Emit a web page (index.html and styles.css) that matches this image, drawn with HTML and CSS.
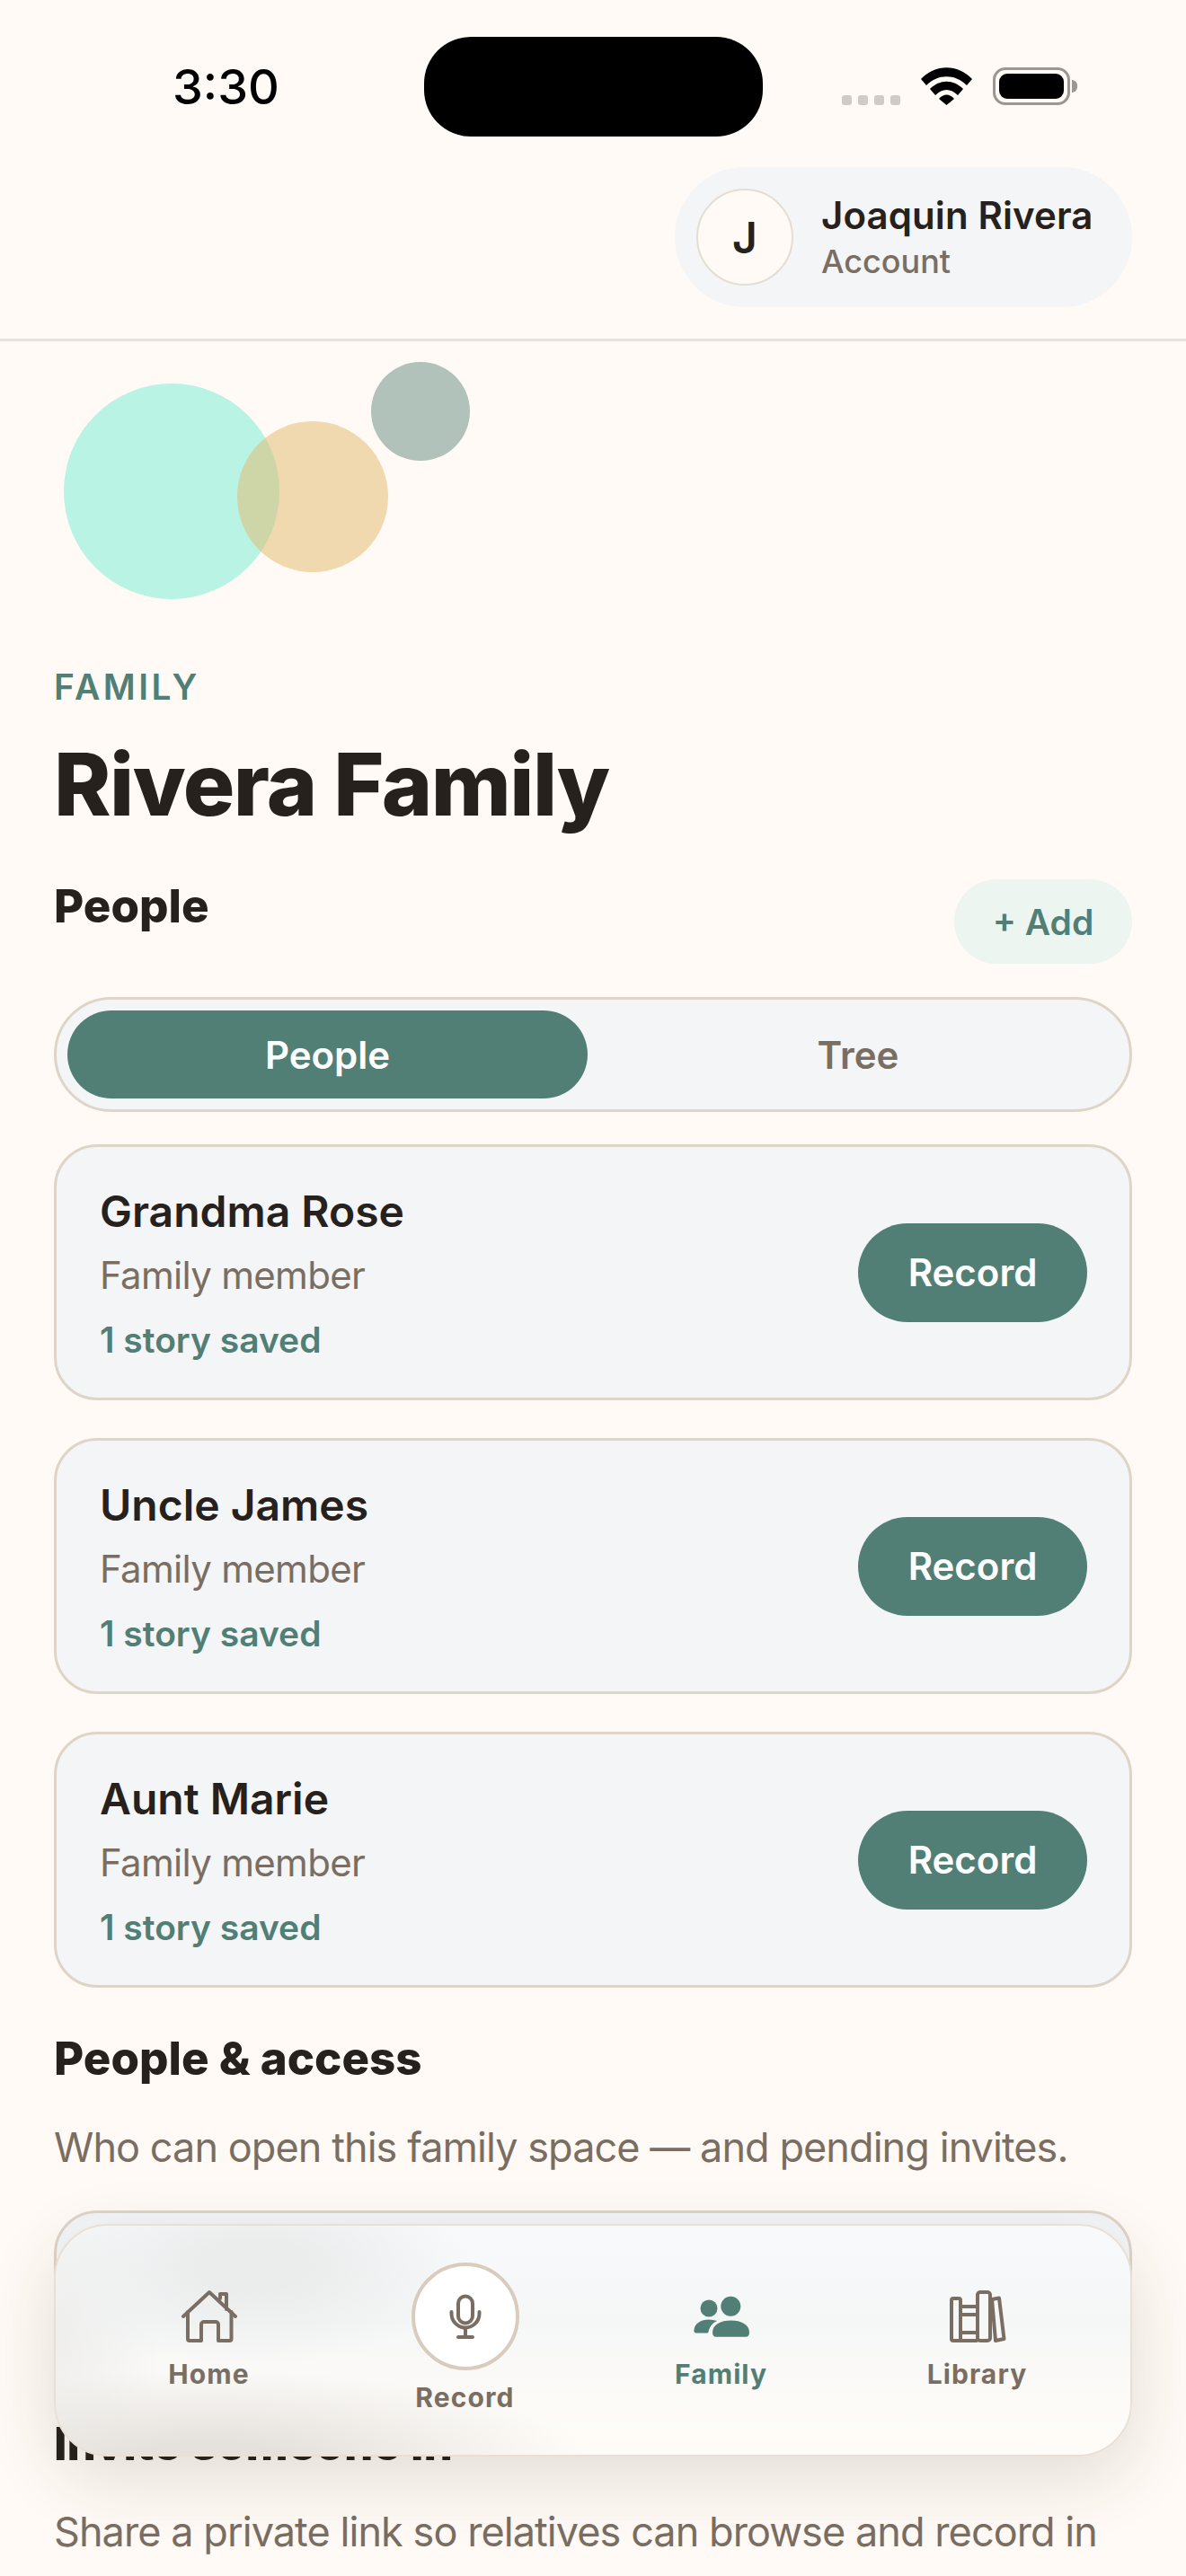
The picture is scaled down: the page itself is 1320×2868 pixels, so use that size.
FILE: index.html
```html
<!DOCTYPE html>
<html lang="en">
<head>
    <meta charset="UTF-8">
    <meta name="viewport" content="width=device-width, initial-scale=1.0">
    <title>Rivera Family</title>
    <link rel="stylesheet" href="styles.css">
</head>
<body>
    <div class="phone">
        <div class="status-bar">
            <div class="status-time">3:30</div>
            <div class="island"></div>
            <div class="status-icons">
                <div class="signal"><span></span><span></span><span></span><span></span></div>
                <svg class="wifi" viewBox="0 0 57 42" width="57" height="42">
                    <path d="M0 13 C16 -4 41 -4 57 13 L51 20 C38 7 19 7 6 20 Z"/>
                    <path d="M10 24 C21 13 36 13 47 24 L41 31 C33 23 24 23 16 31 Z"/>
                    <path d="M20 35 C25 29 32 29 37 35 L28.500 42 Z"/>
                </svg>
                <div class="battery"><div class="battery-fill"></div></div>
            </div>
        </div>

        <header class="topbar">
            <div class="account-pill">
                <div class="avatar">J</div>
                <div class="account-text">
                    <div class="account-name">Joaquin Rivera</div>
                    <div class="account-sub">Account</div>
                </div>
            </div>
        </header>

        <main class="content">
            <div class="blobs">
                <div class="blob blob-mint"></div>
                <div class="blob blob-sand"></div>
                <div class="blob blob-sage"></div>
            </div>

            <div class="eyebrow">FAMILY</div>
            <h1>Rivera Family</h1>

            <div class="section-head">
                <h2>People</h2>
                <button class="add-btn">+ Add</button>
            </div>

            <div class="segment">
                <div class="segment-item active">People</div>
                <div class="segment-item segment-tree">Tree</div>
            </div>

            <div class="person-list">
                <div class="person-card">
                    <div class="person-info">
                        <div class="person-name">Grandma Rose</div>
                        <div class="person-role">Family member</div>
                        <div class="person-stories">1 story saved</div>
                    </div>
                    <button class="record-btn">Record</button>
                </div>
                <div class="person-card">
                    <div class="person-info">
                        <div class="person-name">Uncle James</div>
                        <div class="person-role">Family member</div>
                        <div class="person-stories">1 story saved</div>
                    </div>
                    <button class="record-btn">Record</button>
                </div>
                <div class="person-card">
                    <div class="person-info">
                        <div class="person-name">Aunt Marie</div>
                        <div class="person-role">Family member</div>
                        <div class="person-stories">1 story saved</div>
                    </div>
                    <button class="record-btn">Record</button>
                </div>
            </div>

            <h2 class="access-title">People &amp; access</h2>
            <p class="note">Who can open this family space — and pending invites.</p>

            <div class="access-card"></div>

            <h2 class="invite-title">Invite someone in</h2>
            <p class="note invite-note">Share a private link so relatives can browse and record in</p>
        </main>

        <nav class="tabbar">
            <div class="tab">
                <svg class="tab-icon" viewBox="55 65 72 66" width="72" height="66">
                    <path d="M62 99 L91 72 L120 99"/>
                    <path d="M67 94 V124 a2 2 0 0 0 2 2 H82 V108 a3 3 0 0 1 3 -3 H98 a3 3 0 0 1 3 3 V126 H113.500 a2 2 0 0 0 2 -2 V94"/>
                    <path d="M103 79 V74 H110 V91"/>
                </svg>
                <span>Home</span>
            </div>
            <div class="tab tab-record">
                <div class="mic-circle">
                    <svg class="tab-icon" viewBox="353 70 48 58" width="48" height="58">
                        <rect x="369" y="76.500" width="16" height="30" rx="8"/>
                        <path d="M361.500 94 v2 a15.500 15.500 0 0 0 31 0 v-2"/>
                        <path d="M377 112 V122"/>
                        <path d="M369 122 H385"/>
                    </svg>
                </div>
                <span>Record</span>
            </div>
            <div class="tab tab-active">
                <svg class="tab-icon-solid" viewBox="70 65 66 66" width="66" height="66">
                    <circle cx="89" cy="90" r="9.500"/>
                    <circle cx="113.300" cy="87.700" r="11"/>
                    <path d="M72.500 114 C73 107 80 102.500 89 102.500 C92 102.500 95 103 98 104 C93 106.500 90 110 88.500 116 C88.300 117 87.500 117.500 86.500 117.500 H75 C73 117.500 72 116 72.500 114 Z"/>
                    <path d="M93 117 C93 108 102 103.500 113.500 103.500 C125 103.500 134 108 134 117 C134 120 132.500 121.700 130 121.700 H97 C94.500 121.700 93 120 93 117 Z"/>
                </svg>
                <span>Family</span>
            </div>
            <div class="tab">
                <svg class="tab-icon" viewBox="355 65 68 66" width="68" height="66">
                    <rect x="360" y="79" width="10" height="47" rx="2"/>
                    <path d="M370 88 H388 M370 97 H388 M370 117 H388 M370 126 H388"/>
                    <rect x="389" y="72" width="14" height="54" rx="3"/>
                    <path d="M405 80 L413 78.500 L418.500 124 L409 126 Z"/>
                </svg>
                <span>Library</span>
            </div>
        </nav>
    </div>
</body>
</html>
```

FILE: styles.css
```css
* {
    box-sizing: border-box;
}
html, body {
    margin: 0;
    padding: 0;
    height: 2868px;
    overflow: hidden;
}
body {
    font-family: Inter, "Liberation Sans", sans-serif;
    background: #fffaf5;
    color: #26211c;
}
.phone {
    position: relative;
    width: 1320px;
    height: 2868px;
    overflow: hidden;
    background: #fffaf5;
}

/* status bar */
.status-bar {
    height: 186px;
    padding-top: 41px;
    display: flex;
    align-items: flex-start;
    position: relative;
}
.status-time {
    position: absolute;
    left: 192px;
    top: 66px;
    font-size: 54px;
    line-height: 62px;
    font-weight: 500;
    color: #000;
}
.island {
    width: 377px;
    height: 111px;
    margin-left: 472px;
    background: #000;
    border-radius: 52px;
}
.status-icons {
    margin-left: 88px;
    margin-top: 34px;
    height: 42px;
    display: flex;
    align-items: flex-end;
}
.signal {
    display: flex;
    gap: 7px;
}
.signal span {
    width: 11px;
    height: 11px;
    border-radius: 3px;
    background: #cfccc7;
}
.wifi {
    margin-left: 23px;
    fill: #000;
}
.battery {
    position: relative;
    width: 86px;
    height: 42px;
    margin-left: 23px;
    padding: 4px;
    border: 3px solid #9b9691;
    border-radius: 14px;
}
.battery::after {
    content: "";
    position: absolute;
    right: -11px;
    top: 11px;
    width: 6px;
    height: 14px;
    border-radius: 0 6px 6px 0;
    background: #9b9691;
}
.battery-fill {
    height: 100%;
    background: #000;
    border-radius: 9px;
}

/* account header */
.topbar {
    display: flex;
    justify-content: flex-end;
    padding: 0 60px 35px;
    border-bottom: 3px solid #ebe3d9;
}
.account-pill {
    display: flex;
    align-items: center;
    gap: 31px;
    height: 156px;
    width: 509px;
    padding-left: 24px;
    background: #f3f5f7;
    border-radius: 78px;
}
.avatar {
    width: 108px;
    height: 108px;
    border-radius: 50%;
    background: #fffaf5;
    border: 2px solid #e6ddd2;
    display: flex;
    align-items: center;
    justify-content: center;
    font-size: 48px;
    font-weight: 600;
}
.account-name {
    font-size: 42px;
    line-height: 54px;
    font-weight: 600;
    letter-spacing: 0.100px;
}
.account-sub {
    font-size: 36px;
    line-height: 48px;
    font-weight: 500;
    color: #7a6e63;
}

/* main column */
.content {
    padding: 0 60px;
}
.blobs {
    position: relative;
    height: 361px;
}
.blob {
    position: absolute;
    border-radius: 50%;
}
.blob-mint {
    left: 11px;
    top: 47px;
    width: 240px;
    height: 240px;
    background: rgba(120, 235, 210, 0.52);
}
.blob-sand {
    left: 204px;
    top: 89px;
    width: 168px;
    height: 168px;
    background: rgba(226, 186, 110, 0.52);
}
.blob-sage {
    left: 353px;
    top: 23px;
    width: 110px;
    height: 110px;
    background: rgba(82, 127, 117, 0.45);
}
.eyebrow {
    font-size: 39px;
    line-height: 48px;
    font-weight: 600;
    letter-spacing: 3.500px;
    color: #527f75;
}
h1 {
    margin: 28px 0 0;
    font-size: 96px;
    line-height: 112px;
    font-weight: 800;
    letter-spacing: -1.500px;
}
h2 {
    margin: 0;
    font-size: 51px;
    line-height: 64px;
    font-weight: 800;
}
.section-head {
    display: flex;
    justify-content: space-between;
    align-items: flex-start;
    margin-top: 48px;
}
.add-btn {
    width: 198px;
    height: 94px;
    margin-top: 2px;
    border: none;
    border-radius: 47px;
    background: #edf5f1;
    color: #527f75;
    font-family: inherit;
    font-size: 39px;
    font-weight: 600;
}
.segment {
    display: flex;
    margin-top: 37px;
    height: 128px;
    padding: 12px;
    background: #f3f5f7;
    border: 3px solid #ded4c8;
    border-radius: 64px;
}
.segment-item {
    flex: 1;
    display: flex;
    align-items: center;
    justify-content: center;
    font-size: 42px;
    font-weight: 600;
    color: #7a6e63;
    border-radius: 50px;
}
.segment-item.active {
    flex: 0 0 579px;
    background: #527f75;
    color: #fff;
}
.segment-tree {
    padding-left: 11px;
}
.person-list {
    display: flex;
    flex-direction: column;
    gap: 42px;
    margin-top: 36px;
}
.person-card {
    display: flex;
    align-items: center;
    justify-content: space-between;
    height: 285px;
    padding: 0 47px 0 48px;
    background: #f3f5f7;
    border: 3px solid #ded4c8;
    border-radius: 48px;
}
.person-info {
    padding-top: 2px;
}
.person-name {
    font-size: 48px;
    line-height: 60px;
    font-weight: 600;
}
.person-role {
    margin-top: 14px;
    font-size: 42px;
    line-height: 54px;
    letter-spacing: -0.700px;
    color: #7a6e63;
}
.person-stories {
    margin-top: 20px;
    font-size: 39px;
    line-height: 50px;
    font-weight: 600;
    color: #527f75;
}
.record-btn {
    width: 255px;
    height: 110px;
    border: none;
    border-radius: 55px;
    background: #527f75;
    color: #fff;
    font-family: inherit;
    font-size: 42px;
    font-weight: 600;
}
.access-title {
    margin-top: 47px;
}
.note {
    margin: 37px 0 0;
    font-size: 45px;
    line-height: 60px;
    letter-spacing: -0.930px;
    color: #7a6e63;
    white-space: nowrap;
}
.access-card {
    height: 198px;
    margin-top: 40px;
    background: #f3f5f7;
    border: 3px solid #ded4c8;
    border-radius: 48px;
}
.invite-title {
    margin-top: 30px;
}
.invite-note {
    margin-top: 36px;
}

/* bottom tabs, the soft patches stand in for the blurred content behind the bar */
.tabbar {
    position: absolute;
    left: 60px;
    top: 2476px;
    width: 1200px;
    height: 259px;
    display: flex;
    align-items: flex-start;
    padding: 41px 28px 0;
    background:
        radial-gradient(ellipse 240px 110px at 220px 45px, #ebecec 25%, rgba(235, 236, 236, 0)),
        radial-gradient(ellipse 420px 100px at 170px 260px, #e5e2dd 20%, rgba(229, 226, 221, 0)),
        radial-gradient(ellipse 120px 200px at 0 130px, rgba(235, 234, 232, 0.7), rgba(235, 234, 232, 0)),
        linear-gradient(180deg, #f8f9fb 0%, #f5f7f7 42%, #fcfaf7 72%, #fffcf8 100%);
    border: 2px solid #e9e0d5;
    border-radius: 60px;
    box-shadow: 0 24px 80px rgba(60, 45, 30, 0.14);
}
.tab {
    flex: 1;
    display: flex;
    flex-direction: column;
    align-items: center;
    padding-top: 26px;
    color: #7a6e63;
    font-size: 30px;
    line-height: 36px;
    font-weight: 700;
    letter-spacing: 1.100px;
}
.tab span {
    margin-top: 14px;
}
.tab-icon {
    fill: none;
    stroke: #7a6e63;
    stroke-width: 4;
    stroke-linecap: round;
    stroke-linejoin: round;
}
.tab-icon-solid {
    fill: #527f75;
}
.tab-active {
    color: #527f75;
}
.tab-record {
    padding-top: 0;
}
.tab-record span {
    margin-top: 12px;
}
.mic-circle {
    width: 120px;
    height: 120px;
    display: flex;
    align-items: center;
    justify-content: center;
    background: #fff;
    border: 4px solid #d9ccbd;
    border-radius: 50%;
}
```
